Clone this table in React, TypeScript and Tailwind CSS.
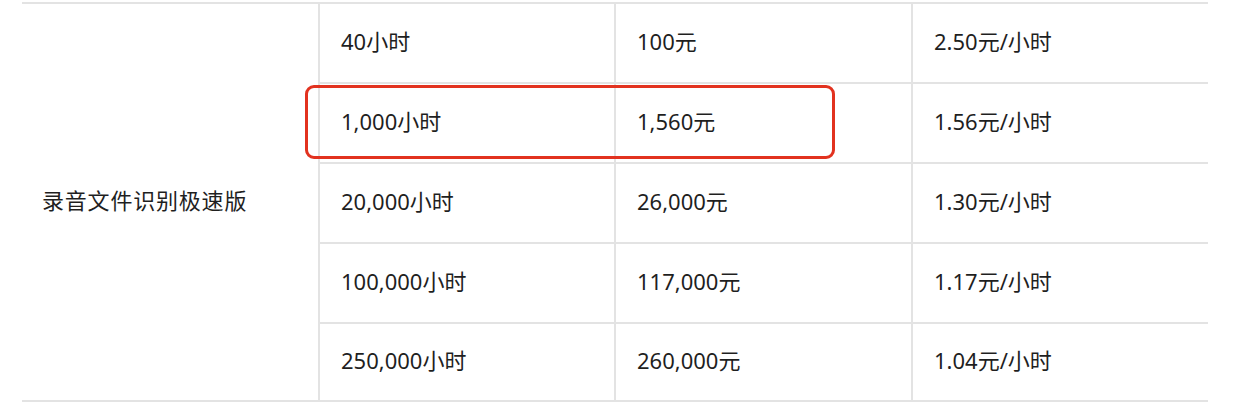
const rows = [
  ["40小时", "100元", "2.50元/小时"],
  ["1,000小时", "1,560元", "1.56元/小时"],
  ["20,000小时", "26,000元", "1.30元/小时"],
  ["100,000小时", "117,000元", "1.17元/小时"],
  ["250,000小时", "260,000元", "1.04元/小时"],
];

export default function App() {
  return (
    <div
      className="w-[1242px] h-[405px] bg-white text-[#1f1f1f] text-[22px] overflow-hidden"
      style={{ fontFamily: '"Noto Sans", "Noto Sans CJK SC", sans-serif' }}
    >
      <div className="ml-[22px] mt-[2px] w-[1186px] flex">
        {/* product name, spans every tier */}
        <div className="w-[296px] shrink-0 flex items-center pl-[20px] pb-[4px] border-t-2 border-b-2 border-[#e3e3e3] tracking-[0.8px]">
          录音文件识别极速版
        </div>
        <div className="flex-1 flex flex-col">
          {rows.map((r, i) => (
            <div
              key={i}
              className={
                "relative flex h-[80px] border-t-2 border-[#e3e3e3]" +
                (i === rows.length - 1 ? " border-b-2" : "")
              }
            >
              <div className="w-[296px] flex items-center pl-[21px] pb-[3px] border-l-2 border-[#e3e3e3]">{r[0]}</div>
              <div className="w-[297px] flex items-center pl-[21px] pb-[3px] border-l-2 border-[#e3e3e3]">{r[1]}</div>
              <div className="flex-1 flex items-center pl-[21px] pb-[3px] border-l-2 border-[#e3e3e3]">{r[2]}</div>
              {i === 1 && (
                <div className="absolute left-[-13px] top-[1px] w-[530px] h-[74px] border-[3px] border-[#e2321f] rounded-[9px]" />
              )}
            </div>
          ))}
        </div>
      </div>
    </div>
  );
}
